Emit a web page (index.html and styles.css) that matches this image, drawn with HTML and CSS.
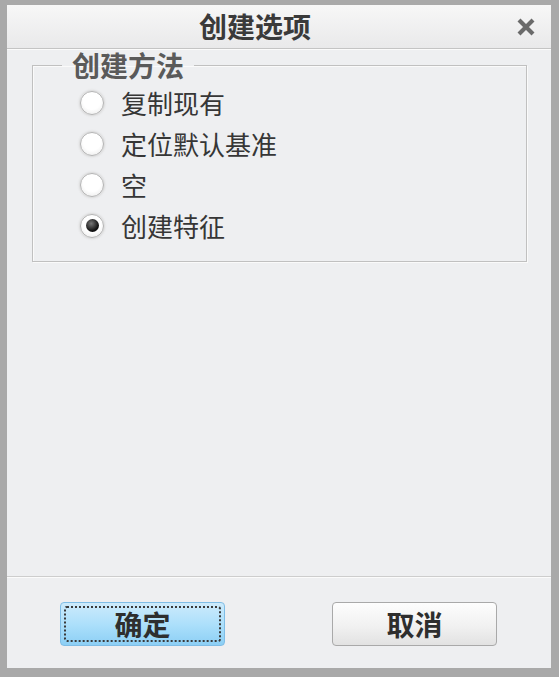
FILE: index.html
```html
<!DOCTYPE html>
<html lang="zh-CN">
<head>
<meta charset="utf-8">
<title>创建选项</title>
<link rel="stylesheet" href="styles.css">
</head>
<body>
<div class="window">
  <div class="titlebar">
    <div class="title">创建选项</div>
    <button class="close" aria-label="关闭">
      <svg width="20" height="20" viewBox="0 0 20 20"><path d="M3 3 L17 17 M17 3 L3 17" stroke="#6a6a6a" stroke-width="4.2" stroke-linecap="butt"/></svg>
    </button>
  </div>
  <div class="content">
    <fieldset class="group">
      <legend>创建方法</legend>
      <label class="row"><input type="radio" name="m"><span>复制现有</span></label>
      <label class="row"><input type="radio" name="m"><span>定位默认基准</span></label>
      <label class="row"><input type="radio" name="m"><span>空</span></label>
      <label class="row"><input type="radio" name="m" checked><span>创建特征</span></label>
    </fieldset>
  </div>
  <div class="footer">
    <button class="btn primary"><span class="focus">确定</span></button>
    <button class="btn">取消</button>
  </div>
</div>
</body>
</html>
```

FILE: styles.css
```css
html, body {
  margin: 0;
  padding: 0;
  background: #eeeff1;
}
.window {
  width: 559px;
  height: 677px;
  box-sizing: border-box;
  border-style: solid;
  border-color: #a9a9a9;
  border-width: 5px 8px 9px 7px;
  background: #eeeff1;
  display: flex;
  flex-direction: column;
  font-family: "Noto Sans CJK SC", "Noto Sans", sans-serif;
  color: #333;
}
.titlebar {
  height: 43px;
  flex: none;
  display: flex;
  align-items: center;
  background: linear-gradient(#f7f7f7, #e9e9ea);
  border-bottom: 1px solid #c4c4c4;
  box-shadow: 0 1px 0 #fbfbfb;
  position: relative;
}
.title {
  flex: 1;
  text-align: center;
  font-size: 28px;
  font-weight: bold;
  color: #3a3a3a;
  padding-right: 13px;
  line-height: 43px;
}
.close {
  flex: none;
  width: 20px;
  height: 20px;
  padding: 0;
  margin: 0 15px 0 0;
  border: 0;
  background: none;
  display: flex;
}
.content {
  flex: 1;
  padding: 1px 24px 0 25px;
}
.group {
  margin: 0;
  padding: 2px 0 15px 0;
  border: 1px solid #c0c0c0;
  box-shadow: inset 1px 1px 0 #fafafa, 1px 1px 0 #fafafa;
  display: flex;
  flex-direction: column;
}
.group legend {
  margin-left: 29px;
  padding: 0 10px;
  font-size: 28px;
  line-height: 30px;
  font-weight: bold;
  color: #5a5a5a;
}
.row {
  height: 41px;
  display: flex;
  align-items: center;
  padding-left: 47px;
  font-size: 26px;
  color: #363636;
}
.row input {
  appearance: none;
  -webkit-appearance: none;
  width: 24px;
  height: 24px;
  margin: 0 17px 0 0;
  border-radius: 50%;
  border: 1px solid #b4b4b4;
  background: radial-gradient(circle at 50% 40%, #ffffff 50%, #e6e6e6 100%);
  box-shadow: 0 0 2px 1px #d8d8d8;
  display: grid;
  place-items: center;
}
.row input:checked::after {
  content: "";
  width: 13px;
  height: 13px;
  border-radius: 50%;
  background: radial-gradient(circle at 40% 35%, #777, #111 65%);
}
.footer {
  height: 92px;
  flex: none;
  box-sizing: border-box;
  border-top: 1px solid #cdcdcd;
  box-shadow: inset 0 1px 0 #fbfbfb;
  display: flex;
  justify-content: space-between;
  align-items: flex-start;
  padding: 25px 54px 0 53px;
}
.btn {
  width: 165px;
  height: 44px;
  box-sizing: border-box;
  border: 1px solid #a9a9a9;
  border-radius: 4px;
  background: linear-gradient(#fdfdfd, #f1f1f1 55%, #e2e2e2);
  font-family: "Noto Sans CJK SC", "Noto Sans", sans-serif;
  font-size: 28px;
  font-weight: bold;
  color: #2e2e2e;
  padding: 0;
  display: flex;
  align-items: center;
  justify-content: center;
  line-height: 1;
}
.btn.primary {
  border-color: #7fbde6;
  background: linear-gradient(#cdeafb, #ade0fb 50%, #8ccff5);
  padding: 3px;
}
.focus {
  flex: 1;
  align-self: stretch;
  display: flex;
  align-items: center;
  justify-content: center;
  border: 2px dotted #3a3a3a;
  border-radius: 3px;
}
```
